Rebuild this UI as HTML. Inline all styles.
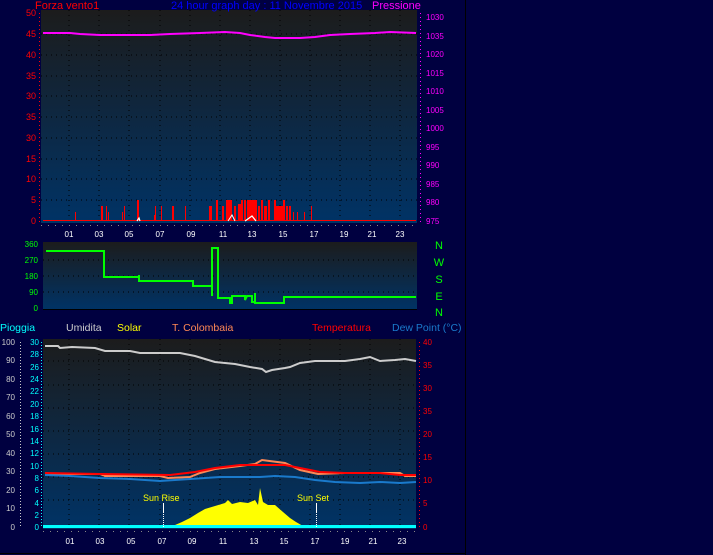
<!DOCTYPE html>
<html><head><meta charset="utf-8"><style>
html,body{margin:0;padding:0;background:#000040;}
svg{display:block;font-family:"Liberation Sans",sans-serif;}
</style></head><body>
<svg width="713" height="555" viewBox="0 0 713 555" xmlns="http://www.w3.org/2000/svg">
<defs>
<linearGradient id="g" x1="0" y1="0" x2="0" y2="1"><stop offset="0" stop-color="#1c1c1c"/><stop offset="1" stop-color="#003366"/></linearGradient>
</defs>
<rect width="713" height="555" fill="#000040"/>
<line x1="465.5" y1="0" x2="465.5" y2="555" stroke="#000" stroke-width="1"/>
<line x1="0" y1="553.5" x2="466" y2="553.5" stroke="#000" stroke-width="1"/>

<!-- TOP PLOT -->
<rect x="41" y="10" width="376" height="213" fill="url(#g)"/>
<g stroke="#000" stroke-dasharray="1,4" stroke-width="1">
<line x1="69" y1="10" x2="69" y2="222"/><line x1="99" y1="10" x2="99" y2="222"/><line x1="129" y1="10" x2="129" y2="222"/><line x1="160" y1="10" x2="160" y2="222"/><line x1="190" y1="10" x2="190" y2="222"/><line x1="220" y1="10" x2="220" y2="222"/><line x1="250" y1="10" x2="250" y2="222"/><line x1="280" y1="10" x2="280" y2="222"/><line x1="310" y1="10" x2="310" y2="222"/><line x1="340" y1="10" x2="340" y2="222"/><line x1="370" y1="10" x2="370" y2="222"/><line x1="400" y1="10" x2="400" y2="222"/>
<line x1="41" y1="34" x2="417" y2="34"/><line x1="41" y1="55" x2="417" y2="55"/><line x1="41" y1="76" x2="417" y2="76"/><line x1="41" y1="96" x2="417" y2="96"/><line x1="41" y1="117" x2="417" y2="117"/><line x1="41" y1="138" x2="417" y2="138"/><line x1="41" y1="159" x2="417" y2="159"/><line x1="41" y1="179" x2="417" y2="179"/><line x1="41" y1="200" x2="417" y2="200"/>
</g>
<polyline fill="none" stroke="#ff00ff" stroke-width="2" points="43,33 70,33 80,34 100,35 150,35 170,34 200,33 225,32 240,33 250,35 265,37 275,38 300,38 315,37 330,35 350,34 375,33 390,32 416,33"/>
<g fill="#ff0000">
<rect x="75" y="212" width="1" height="9"/><rect x="101" y="206" width="2" height="15"/><rect x="106" y="206" width="1" height="15"/><rect x="108" y="212" width="1" height="9"/><rect x="122" y="212" width="1" height="9"/><rect x="124" y="206" width="1" height="15"/><rect x="137" y="200" width="2" height="21"/><rect x="154" y="215" width="2" height="6"/><rect x="155" y="206" width="1" height="15"/><rect x="161" y="206" width="1" height="15"/><rect x="172" y="206" width="2" height="15"/><rect x="185" y="206" width="1" height="15"/>
<rect x="209" y="206" width="3" height="15"/><rect x="216" y="200" width="2" height="21"/><rect x="222" y="206" width="2" height="15"/><rect x="226" y="200" width="6" height="21"/><rect x="234" y="206" width="2" height="15"/><rect x="238" y="204" width="3" height="17"/><rect x="241" y="200" width="2" height="21"/><rect x="244" y="200" width="2" height="21"/><rect x="247" y="200" width="10" height="21"/><rect x="258" y="206" width="2" height="15"/><rect x="261" y="200" width="2" height="21"/><rect x="264" y="206" width="3" height="15"/><rect x="268" y="200" width="2" height="21"/><rect x="274" y="200" width="2" height="21"/><rect x="276" y="206" width="8" height="15"/><rect x="283" y="200" width="2" height="21"/><rect x="286" y="206" width="2" height="15"/><rect x="289" y="206" width="2" height="15"/><rect x="293" y="212" width="1" height="9"/><rect x="297" y="212" width="1" height="9"/><rect x="304" y="212" width="1" height="9"/><rect x="311" y="206" width="1" height="15"/>
<rect x="43" y="220" width="373" height="1"/>
</g>
<polyline fill="none" stroke="#fff" stroke-width="1" points="228,221 232,215 235,221 M0,0"/>
<polyline fill="none" stroke="#fff" stroke-width="1.2" points="245,221 252,216 256,221"/>
<polyline fill="none" stroke="#fff" stroke-width="1.2" points="137,221 139,218 140,221"/>
<g fill="#ff0000" font-size="9" text-anchor="end">
<text x="36" y="16">50</text><text x="36" y="37">45</text><text x="36" y="58">40</text><text x="36" y="79">35</text><text x="36" y="99">30</text><text x="36" y="120">35</text><text x="36" y="141">30</text><text x="36" y="162">15</text><text x="36" y="182">10</text><text x="36" y="203">5</text><text x="36" y="224">0</text>
</g>
<g stroke="#ff0000" stroke-dasharray="1,3"><line x1="39.5" y1="13" x2="39.5" y2="222"/></g>
<g fill="#ff00ff" font-size="8">
<text x="426" y="20">1030</text><text x="426" y="39">1035</text><text x="426" y="57">1020</text><text x="426" y="76">1015</text><text x="426" y="94">1010</text><text x="426" y="113">1005</text><text x="426" y="131">1000</text><text x="426" y="150">995</text><text x="426" y="168">990</text><text x="426" y="187">985</text><text x="426" y="205">980</text><text x="426" y="224">975</text>
</g>
<g stroke="#ff00ff" stroke-dasharray="1,3"><line x1="420.5" y1="13" x2="420.5" y2="222"/></g>
<text x="35" y="9" fill="#ff0000" font-size="11">Forza vento1</text>
<text x="171" y="9" fill="#0000ff" font-size="11">24 hour graph day : 11 Novembre 2015</text>
<text x="372" y="9" fill="#ff00ff" font-size="11">Pressione</text>
<g stroke="#888" stroke-dasharray="1,6"><line x1="41" y1="225.5" x2="417" y2="225.5"/></g>
<g fill="#fff" font-size="8" text-anchor="middle">
<text x="69" y="237">01</text><text x="99" y="237">03</text><text x="129" y="237">05</text><text x="160" y="237">07</text><text x="191" y="237">09</text><text x="223" y="237">11</text><text x="252" y="237">13</text><text x="283" y="237">15</text><text x="314" y="237">17</text><text x="344" y="237">19</text><text x="372" y="237">21</text><text x="400" y="237">23</text>
</g>

<!-- MIDDLE PLOT -->
<rect x="43" y="242" width="374" height="68" fill="url(#g)"/>
<rect x="43" y="309" width="374" height="1" fill="#000"/>
<g stroke="#000" stroke-dasharray="1,4">
<line x1="43" y1="260" x2="417" y2="260"/><line x1="43" y1="276" x2="417" y2="276"/><line x1="43" y1="292" x2="417" y2="292"/>
</g>
<polyline fill="none" stroke="#00ff00" stroke-width="2" points="46,251 104,251 104,277 139,277 139,275 139,281 193,281 193,286 212,286 212,296 212,248 218,248 218,298 230,298 230,303 232,303 232,296 245,296 245,300 247,296 252,296 252,302 255,302 255,293 255,303 284,303 284,297 416,297"/>
<g fill="#00ff00" font-size="8" text-anchor="end">
<text x="38" y="247">360</text><text x="38" y="263">270</text><text x="38" y="279">180</text><text x="38" y="295">90</text><text x="38" y="311">0</text>
</g>
<g fill="#00ff00" font-size="11" text-anchor="middle">
<text x="439" y="249">N</text><text x="439" y="266">W</text><text x="439" y="283">S</text><text x="439" y="300">E</text><text x="439" y="316">N</text>
</g>

<!-- LEGEND -->
<g font-size="10.5">
<text x="0" y="331" fill="#00ffff">Pioggia</text>
<text x="66" y="331" fill="#cccccc">Umidita</text>
<text x="117" y="331" fill="#ffff00">Solar</text>
<text x="172" y="331" fill="#ff8855">T. Colombaia</text>
<text x="312" y="331" fill="#ff0000">Temperatura</text>
<text x="392" y="331" fill="#1a7acc">Dew Point (°C)</text>
</g>

<!-- BOTTOM PLOT -->
<rect x="43" y="339" width="373" height="190" fill="url(#g)"/>
<g stroke="#000" stroke-dasharray="1,4">
<line x1="69" y1="339" x2="69" y2="528"/><line x1="99" y1="339" x2="99" y2="528"/><line x1="129" y1="339" x2="129" y2="528"/><line x1="160" y1="339" x2="160" y2="528"/><line x1="190" y1="339" x2="190" y2="528"/><line x1="220" y1="339" x2="220" y2="528"/><line x1="250" y1="339" x2="250" y2="528"/><line x1="280" y1="339" x2="280" y2="528"/><line x1="310" y1="339" x2="310" y2="528"/><line x1="340" y1="339" x2="340" y2="528"/><line x1="370" y1="339" x2="370" y2="528"/><line x1="400" y1="339" x2="400" y2="528"/>
<line x1="43" y1="361" x2="416" y2="361"/><line x1="43" y1="385" x2="416" y2="385"/><line x1="43" y1="408" x2="416" y2="408"/><line x1="43" y1="431" x2="416" y2="431"/><line x1="43" y1="454" x2="416" y2="454"/><line x1="43" y1="477" x2="416" y2="477"/><line x1="43" y1="500" x2="416" y2="500"/>
</g>
<polyline fill="none" stroke="#cccccc" stroke-width="2" points="45,346 58,346 60,348 72,347 95,348 105,351 130,351 140,353 165,353 180,353 195,356 205,359 215,362 235,364 250,367 262,369 266,372 272,370 285,368 290,367 300,363 315,361 345,361 360,359 370,357 380,361 395,360 405,359 416,361"/>
<polygon fill="#ffff00" points="170,527 175,525 182,522 190,518 198,513 205,509 215,506 225,503 228,500 232,504 240,502 248,503 255,500 258,505 260,488 263,502 268,505 275,505 283,512 290,518 296,522 303,526 308,527"/>
<polyline fill="none" stroke="#ff8855" stroke-width="2" points="45,474 100,474 105,476 160,476 168,478 190,477 200,473 215,469 240,466 255,464 262,460 285,463 300,470 318,474 345,473 400,473 405,476 416,476"/>
<polyline fill="none" stroke="#ff0000" stroke-width="2" points="45,473 100,474 170,475 195,472 215,468 240,465 265,465 285,465 300,468 320,472 345,473 380,473 400,475 416,475"/>
<polyline fill="none" stroke="#1a7acc" stroke-width="2" points="45,475 70,476 100,478 130,479 160,481 190,479 220,477 260,477 275,476 295,477 315,480 335,482 360,483 380,482 400,483 416,482"/>
<rect x="43" y="525" width="373" height="3" fill="#00ffff"/>
<g stroke="#fff" stroke-width="1"><line x1="163.5" y1="503" x2="163.5" y2="512"/><line x1="316.5" y1="503" x2="316.5" y2="512"/></g>
<g stroke="#fff" stroke-dasharray="1,1"><line x1="163.5" y1="512" x2="163.5" y2="527"/><line x1="316.5" y1="512" x2="316.5" y2="527"/></g>
<text x="143" y="501" fill="#ffff00" font-size="9">Sun Rise</text>
<text x="297" y="501" fill="#ffff00" font-size="9">Sun Set</text>
<g fill="#cccccc" font-size="8" text-anchor="end">
<text x="15" y="345">100</text><text x="15" y="363">90</text><text x="15" y="382">80</text><text x="15" y="400">70</text><text x="15" y="419">60</text><text x="15" y="437">50</text><text x="15" y="456">40</text><text x="15" y="474">30</text><text x="15" y="493">20</text><text x="15" y="511">10</text><text x="15" y="530">0</text>
</g>
<g stroke="#cccccc" stroke-dasharray="1,2"><line x1="20.5" y1="342" x2="20.5" y2="528"/></g>
<g fill="#00ffff" font-size="8" text-anchor="end">
<text x="39" y="345">30</text><text x="39" y="357">28</text><text x="39" y="370">26</text><text x="39" y="382">24</text><text x="39" y="394">22</text><text x="39" y="407">20</text><text x="39" y="419">18</text><text x="39" y="432">16</text><text x="39" y="444">14</text><text x="39" y="456">12</text><text x="39" y="469">10</text><text x="39" y="481">8</text><text x="39" y="493">6</text><text x="39" y="506">4</text><text x="39" y="518">2</text><text x="39" y="530">0</text>
</g>
<g stroke="#00ffff" stroke-dasharray="1,2"><line x1="41.5" y1="342" x2="41.5" y2="528"/></g>
<g fill="#ff0000" font-size="8">
<text x="423" y="345">40</text><text x="423" y="368">35</text><text x="423" y="391">30</text><text x="423" y="414">35</text><text x="423" y="437">20</text><text x="423" y="460">15</text><text x="423" y="483">10</text><text x="423" y="506">5</text><text x="423" y="530">0</text>
</g>
<g stroke="#ff0000" stroke-dasharray="1,3"><line x1="419.5" y1="342" x2="419.5" y2="528"/></g>
<g stroke="#888" stroke-dasharray="1,6"><line x1="43" y1="531.5" x2="416" y2="531.5"/></g>
<g fill="#fff" font-size="8" text-anchor="middle">
<text x="70" y="544">01</text><text x="100" y="544">03</text><text x="131" y="544">05</text><text x="162" y="544">07</text><text x="192" y="544">09</text><text x="223" y="544">11</text><text x="254" y="544">13</text><text x="284" y="544">15</text><text x="315" y="544">17</text><text x="345" y="544">19</text><text x="373" y="544">21</text><text x="402" y="544">23</text>
</g>
</svg>
</body></html>
